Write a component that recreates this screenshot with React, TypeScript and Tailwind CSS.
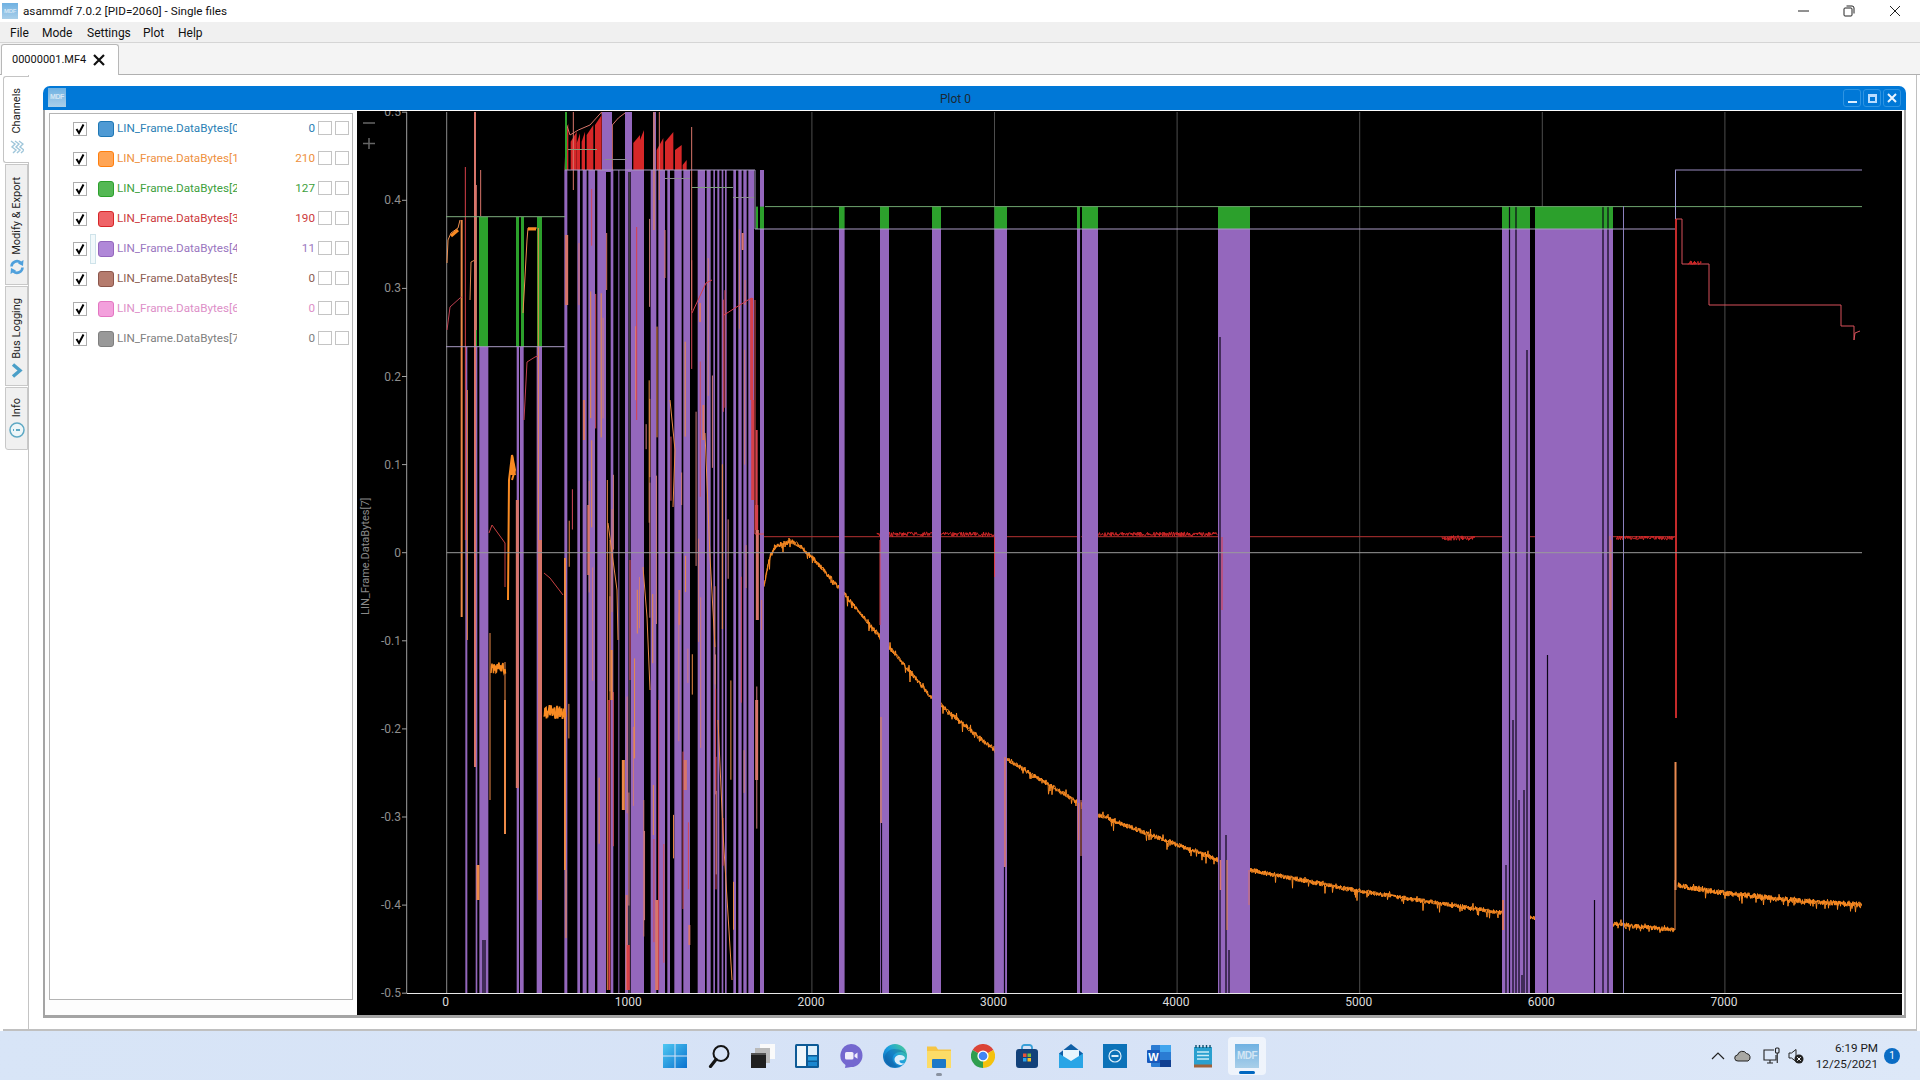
import React from "react";

const FONT = "font-['Roboto',sans-serif]";

// ---------- chart helpers (page coordinates; the svg viewBox starts at the plot's top-left) ----------
const X = (t: number) => 446.7 + 0.1826 * t;
const Y = (v: number) => 552.7 - 881 * v;
const Z = (px: number) => 360 + px / 3;
const TOP = 112;
const BOT = 993;

function rng(seed: number) {
  let s = seed;
  return () => {
    s = (s * 9301 + 49297) % 233280;
    return s / 233280;
  };
}

function noisy(anchors: [number, number][], seed: number, amp: number, spike: number) {
  const r = rng(seed);
  const pts: string[] = [];
  for (let i = 0; i < anchors.length - 1; i++) {
    const [x1, y1] = anchors[i];
    const [x2, y2] = anchors[i + 1];
    for (let x = x1; x < x2; x += 0.5) {
      const y = y1 + ((y2 - y1) * (x - x1)) / (x2 - x1);
      const k = r();
      const j = k > 0.92 ? (r() - 0.35) * spike : (r() - 0.5) * amp;
      pts.push(`${x.toFixed(1)},${(y + j).toFixed(1)}`);
    }
  }
  return pts.join(" ");
}

const purple = "#9467bd";
const green = "#2ca02c";
const red = "#d62728";
const orange = "#f98a22";
const S = "#d8756a";
const O = "#ec8a48";
const R = "#d8404a";

const earlyBars: [number, number][] = [
  [316, 322], [347, 352], [358, 385], [470, 477], [480, 491], [530, 546],
];
const denseBars: [number, number][] = [
  [613, 622], [652, 660], [668, 680], [685, 705], [712, 738], [752, 760], [775, 778], [795, 805], [812, 852],
  [872, 889], [895, 915], [922, 930], [943, 965], [970, 990], [1013, 1035], [1040, 1052], [1060, 1065],
  [1072, 1078], [1085, 1090], [1095, 1100], [1120, 1128], [1135, 1145], [1150, 1160], [1165, 1182], [1200, 1212],
];
const laterBars: [number, number][] = [
  [839, 844.6], [880, 889], [932, 941], [994.4, 1007], [1077, 1080], [1082, 1098], [1218, 1250],
  [1502, 1530], [1535, 1613],
];
const greenEarly: [number, number][] = [[474, 477], [479, 488], [516, 519], [521, 524], [537, 542]];
const greenLater = [...laterBars, [756, 758] as [number, number], [760, 764] as [number, number]];

const blacks: [number, number, number][] = [
  [881.5, 823, BOT], [1004.5, 867, BOT], [1080.7, 229, BOT], [1220, 337, BOT], [1226, 835, BOT], [1229, 950, BOT],
  [1509.5, 206, BOT], [1516, 206, BOT], [1513, 720, BOT], [1527, 350, BOT], [1524, 790, BOT], [1603, 206, BOT],
  [1608, 206, BOT], [1547.5, 655, BOT], [1594.5, 900, BOT], [1506, 865, BOT], [1519, 800, BOT], [1522, 975, BOT],
  [485, 940, BOT], [483, 940, BOT],
];

const segs: [number, number, number, string, number][] = [
  [305, 220, 617, O, 2], [316, 167, 540, R, 1], [345, 112, 767, S, 2], [349, 185, 330, S, 1], [362, 170, 216, S, 1],
  [322, 390, 640, O, 1], [435, 700, 834, O, 2], [535, 228, 560, O, 1], [540, 540, 900, S, 4], [472, 500, 788, S, 3],
  [615, 558, 870, O, 2], [618, 870, 938, O, 1], [640, 112, 190, S, 1], [620, 235, 305, S, 3], [657, 243, 305, S, 1],
  [740, 233, 290, S, 1], [830, 227, 420, R, 1], [915, 230, 278, S, 1], [995, 127, 310, S, 1], [1020, 303, 322, S, 2],
  [1175, 298, 400, R, 3], [1148, 233, 250, S, 2], [1155, 280, 305, S, 1], [882, 112, 230, O, 1], [898, 112, 200, S, 1],
  [1178, 400, 500, R, 3], [1190, 505, 530, R, 3], [1190, 700, 780, S, 3], [1192, 530, 620, S, 3], [1205, 600, 630, S, 1],
  [685, 505, 575, S, 2], [672, 400, 440, S, 2], [750, 540, 700, O, 1], [755, 650, 700, O, 2], [810, 560, 680, R, 1],
  [790, 760, 810, O, 3], [800, 895, 990, S, 2], [805, 945, 990, R, 3], [880, 785, 835, O, 1], [890, 900, 990, S, 3],
  [896, 700, 990, R, 1], [976, 760, 790, S, 3], [988, 925, 945, S, 2], [958, 590, 625, S, 2], [748, 700, 990, R, 2],
  [742, 480, 990, O, 1], [1030, 405, 440, S, 2], [1190, 430, 520, R, 2], [354, 865, 900, O, 3],
];

const laterSegs: [number, number, number, string, number][] = [
  [881, 717, 823, O, 1], [1005, 757, 867, S, 1.5], [1078.5, 803, 840, S, 1.5], [1081, 800, 856, S, 1], [1220.5, 860, 890, S, 1.5],
  [1227, 860, 930, O, 1], [1249, 870, 905, S, 1], [994.5, 537, 577, R, 1], [880, 540, 625, R, 1], [1222, 537, 590, R, 1],
  [1222, 590, 610, R, 1], [1611, 540, 610, S, 1], [1503, 900, 930, S, 2],
];

// thin blended traces scattered over the dense block
const scatter: [number, number, number, string][] = (() => {
  const r = rng(41);
  const out: [number, number, number, string][] = [];
  for (let i = 0; i < 70; i++) {
    const x = 566 + r() * 198;
    const a = 175 + r() * 720;
    const len = 25 + r() * 140;
    const k = r();
    out.push([x, a, Math.min(a + len, BOT), k < 0.55 ? "#cf7a78" : k < 0.8 ? "#ea8a45" : "#d24a58"]);
  }
  return out;
})();

const sawtooth: number[][] = [
  [618, 70], [625, 70], [632, 95], [650, 95], [650, 100], [660, 100], [665, 95], [675, 95], [680, 75], [700, 75], [705, 45], [725, 45],
];

const Chart = () => {
  const anchors: [number, number][] = [[764, 585], [770, 557], [775, 547], [790, 541], [800, 546], [812, 557], [841, 590], [880, 637], [890, 648], [931, 697], [994, 750], [1008, 760], [1079, 803], [1098, 815], [1218, 860], [1250, 870], [1353, 890], [1502, 913], [1530, 917], [1594, 922], [1675, 930]];
  const orangeMain = noisy(anchors, 7, 5, 16);
  const orangeMain2 = noisy(anchors, 29, 4, 10);
  const endAnchors: [number, number][] = [[1678, 885], [1690, 888], [1724, 893], [1790, 900], [1862, 905]];
  const orangeEnd = noisy(endAnchors, 11, 6, 14);
  const orangeEnd2 = noisy(endAnchors, 31, 5, 10);
  const redBase = noisy([[877, 534], [1000, 534]], 3, 4, 5);
  const redB2 = noisy([[1098, 534], [1218, 534]], 5, 4, 5);
  const redB3 = noisy([[1442, 538], [1475, 538]], 9, 5, 4);
  const redB4 = noisy([[1616, 538], [1675, 538]], 13, 4, 4);
  return (
    <svg viewBox="357 111 1545 904" className={`block h-[904px] w-[1545px] bg-black ${FONT}`} fontSize="12">
      {/* grid */}
      {[1000, 2000, 3000, 4000, 5000, 6000, 7000].map((t) => (
        <line key={t} x1={X(t)} x2={X(t)} y1={TOP} y2={BOT} stroke="#4d4d4d" />
      ))}
      {/* channel 0, vertical */}
      <line x1={446.7} x2={446.7} y1={TOP} y2={BOT} stroke="#8a8a8a" />
      {/* orange and red traces that are hidden by the purple bars */}
      <polyline points={orangeMain} fill="none" stroke={orange} strokeWidth="1" />
      <polyline points={orangeMain2} fill="none" stroke={orange} strokeWidth="1" />
      <polyline points={orangeEnd} fill="none" stroke={orange} strokeWidth="1" />
      <polyline points={orangeEnd2} fill="none" stroke={orange} strokeWidth="1" />
      <line x1={760} x2={1676} y1={536.7} y2={536.7} stroke="#b53232" />
      <polyline points={redBase} fill="none" stroke={red} strokeWidth="1" />
      <polyline points={redB2} fill="none" stroke={red} strokeWidth="1" />
      <polyline points={redB3} fill="none" stroke={red} strokeWidth="1" />
      <polyline points={redB4} fill="none" stroke={red} strokeWidth="1" />

      {/* sawtooth above the dense block */}
      {sawtooth.map(([px, py], i) =>
        i % 2 === 0 ? (
          <polygon
            key={px + "-" + i}
            points={`${Z(px)},170 ${Z(px)},${100 + py / 3 + 10} ${Z(sawtooth[i + 1][0])},${100 + py / 3} ${Z(sawtooth[i + 1][0])},170`}
            fill={red}
          />
        ) : null,
      )}
      <polyline
        points={`${Z(615)},170 ${Z(620)},125 ${Z(630)},135 ${Z(655)},130 ${Z(690)},125 ${Z(725)},112 ${Z(757)},170 ${Z(757)},125 ${Z(775)},118 ${Z(795)},113`}
        fill="none"
        stroke={S}
      />
      {[[820, 840, 143, 135], [840, 852, 140, 130], [890, 910, 150, 138], [915, 940, 142, 132], [945, 965, 150, 145], [968, 980, 165, 160]].map(
        ([a, b, c, d]) => (
          <polygon key={a} points={`${Z(a)},170 ${Z(a)},${c} ${Z(b)},${d} ${Z(b)},170`} fill={red} />
        ),
      )}

      {/* purple bars */}
      {earlyBars.map(([a, b]) => (
        <rect key={a} x={Z(a)} width={(b - a) / 3} y={347} height={BOT - 347} fill={purple} />
      ))}
      {denseBars.map(([a, b]) => (
        <rect key={a} x={Z(a)} width={(b - a) / 3} y={170} height={BOT - 170} fill={purple} />
      ))}
      <rect x={602} width={10} y={TOP} height={60} fill={purple} />
      <rect x={625} width={7} y={TOP} height={60} fill={purple} />
      <rect x={653} width={3} y={TOP} height={60} fill={purple} />
      {laterBars.map(([a, b]) => (
        <rect key={a} x={a} width={b - a} y={229} height={BOT - 229} fill={purple} />
      ))}
      <rect x={1079} width={1} y={229} height={BOT - 229} fill={purple} />

      {/* green bars */}
      {greenEarly.map(([a, b]) => (
        <rect key={a} x={a} width={b - a} y={217} height={130} fill={green} />
      ))}
      {greenLater.map(([a, b]) => (
        <rect key={a} x={a} width={b - a} y={206.6} height={22.4} fill={green} />
      ))}
      <rect x={565} width={2} y={112} height={58} fill={green} />

      {/* black gaps */}
      {blacks.map(([x, a, b], i) => (
        <line key={i} x1={x} x2={x} y1={a} y2={b} stroke="#0b0616" strokeWidth="1.2" />
      ))}

      {/* overlaid traces */}
      {scatter.map(([x, a, b, c], i) => (
        <line key={i} x1={x} x2={x} y1={a} y2={b} stroke={c} strokeWidth="1" />
      ))}
      {segs.map(([px, a, b, c, w], i) => (
        <line key={i} x1={Z(px)} x2={Z(px)} y1={a} y2={b} stroke={c} strokeWidth={w} />
      ))}
      {laterSegs.map(([x, a, b, c, w], i) => (
        <line key={i} x1={x} x2={x} y1={a} y2={b} stroke={c} strokeWidth={w} />
      ))}
      {/* early curves */}
      <polyline points="447,263 448,240 451,233 458,228 460,220" fill="none" stroke="#f09050" />
      <polyline points="451,236 458,230" fill="none" stroke={orange} strokeWidth="3" />
      <polyline points="447,330 450,307 460,298 462,297" fill="none" stroke="#c04050" />
      <polyline points="470,300 471,262 475,260" fill="none" stroke="#e08a50" />
      <polyline points="523,313 527,240 528,228 537,228" fill="none" stroke="#f09050" />
      <line x1={528} x2={536} y1={229} y2={229} stroke={orange} strokeWidth="3" />
      <polyline points="524,420 527,362 535,357 538,356" fill="none" stroke="#c04050" />
      <polyline points="489,533 492,525 505,543 505,587" fill="none" stroke="#c84040" />
      <polyline points="544,573 550,578 563,595" fill="none" stroke="#c84040" />
      <polyline points="508,600 509,480 512,455 515,470 512,480" fill="none" stroke={orange} strokeWidth="2" />
      <polygon points="510,470 513,455 515,470 516,475 510,475" fill={orange} />
      <line x1={490} x2={490} y1={633} y2={800} stroke={O} />
      <line x1={505} x2={505} y1={662} y2={830} stroke={O} />
      <polyline points={noisy([[491, 668], [506, 668]], 17, 12, 14)} fill="none" stroke={orange} strokeWidth="1.5" />
      <polyline points={noisy([[544, 712], [566, 712]], 19, 14, 14)} fill="none" stroke={orange} strokeWidth="1.8" />
      <polyline points="608,523 617,590 618,640" fill="none" stroke={O} />
      <polyline points="643,567 647,617 650,690" fill="none" stroke={O} />
      <polyline points="670,400 675,450 673,507" fill="none" stroke={O} />
      <polyline points="705,433 710,557 715,647" fill="none" stroke={O} />
      <polyline points="718,720 723,833 732,980" fill="none" stroke={O} />
      <polyline points="692,313 706,283 712,280" fill="none" stroke={R} />
      <polyline points="724,315 735,308 748,300 752,298" fill="none" stroke={R} />
      <polyline points="755,300 755,534 764,534" fill="none" stroke="#e05050" />
      <line x1={1610} x2={1610} y1={536} y2={610} stroke={S} />

      {/* step traces */}
      <line x1={446} x2={565} y1={216.7} y2={216.7} stroke="#7fae7f" />
      <line x1={446} x2={565} y1={346.7} y2={346.7} stroke="#a99ac4" />
      <line x1={565} x2={755} y1={170} y2={170} stroke="#a99ac4" />
      <line x1={755} x2={755} y1={170} y2={229} stroke="#a99ac4" />
      <line x1={755} x2={1675} y1={229} y2={229} stroke="#a99ac4" />
      <line x1={765} x2={1862} y1={206.6} y2={206.6} stroke="#6fa56f" />
      <line x1={1675.5} x2={1675.5} y1={170} y2={229} stroke="#a0a0d8" />
      <line x1={1675} x2={1862} y1={170} y2={170} stroke="#9a8cc0" />
      <line x1={568} x2={597} y1={149.5} y2={149.5} stroke="#8a9a7a" />
      <line x1={605} x2={627} y1={159.5} y2={159.5} stroke="#8a8a90" />
      <line x1={665} x2={690} y1={178.5} y2={178.5} stroke="#8a8a90" />
      <line x1={692} x2={733} y1={187.5} y2={187.5} stroke="#7f9f7f" />
      <line x1={733} x2={754} y1={197.5} y2={197.5} stroke="#8a8a90" />
      <line x1={1623.5} x2={1623.5} y1={206} y2={BOT} stroke="#8b80bd" />

      {/* red trace at the end */}
      <line x1={1676} x2={1676} y1={219} y2={718} stroke="#c42a2a" strokeWidth="2" />
      <polyline
        points="1676,219 1682,219 1682,264 1709,264 1709,305 1841,305 1841,326 1854,326 1854,340 1855,333 1860,331"
        fill="none"
        stroke="#d8505a"
      />
      <polyline points={noisy([[1688, 263], [1702, 263]], 23, 4, 2)} fill="none" stroke={red} />
      <line x1={1675.5} x2={1675.5} y1={762} y2={890} stroke="#e88a50" strokeWidth="2" />
      <polyline points="1675,930 1675,880" fill="none" stroke="#e88a50" />

      {/* zero line */}
      <line x1={446.7} x2={1862} y1={552.7} y2={552.7} stroke="#9a9a9a" />

      {/* axes */}
      <line x1={406.7} x2={406.7} y1={TOP} y2={BOT} stroke="#a0a0a0" />
      <line x1={407} x2={1902} y1={993.5} y2={993.5} stroke="#e8e8e8" />
      {[0.5, 0.4, 0.3, 0.2, 0.1, 0, -0.1, -0.2, -0.3, -0.4, -0.5].map((v) => (
        <g key={v}>
          <line x1={402} x2={407} y1={Y(v)} y2={Y(v)} stroke="#a0a0a0" />
          <text x={401} y={Y(v) + 4} textAnchor="end" fill="#8f8f8f">
            {v}
          </text>
        </g>
      ))}
      {[0, 1000, 2000, 3000, 4000, 5000, 6000, 7000].map((t) => (
        <text key={t} x={X(t) - 1} y={1006} textAnchor="middle" fill="#dcdcdc">
          {t}
        </text>
      ))}
      <text transform="translate(369 615) rotate(-90)" fill="#8a8a8a" fontSize="11">
        LIN_Frame.DataBytes[7]
      </text>
      {/* zoom marks */}
      <line x1={363} x2={375} y1={123} y2={123} stroke="#666" strokeWidth="1.5" />
      <line x1={363} x2={375} y1={143.5} y2={143.5} stroke="#666" strokeWidth="1.5" />
      <line x1={369} x2={369} y1={138} y2={149} stroke="#666" strokeWidth="1.5" />
    </svg>
  );
};

// ---------- small app pieces ----------
const MdfIcon = ({ size, text }: { size: string; text: string }) => (
  <div
    className={`${size} ${text} flex shrink-0 items-center justify-center overflow-hidden bg-gradient-to-b from-[#6fb1e2] to-[#a9cfe9] font-bold tracking-tighter text-[#d4e6f4] font-['Liberation_Sans',sans-serif]`}
  >
    MDF
  </div>
);

const channels = [
  { n: 0, v: "0", c: "text-[#2b7fb5]", s: "bg-[#4f9ad4] border-[#1f77b4]" },
  { n: 1, v: "210", c: "text-[#ee9040]", s: "bg-[#ffa555] border-[#ff7f0e]" },
  { n: 2, v: "127", c: "text-[#3d9f3d]", s: "bg-[#55b855] border-[#2ca02c]" },
  { n: 3, v: "190", c: "text-[#cc3a3c]", s: "bg-[#ef6468] border-[#d62728]" },
  { n: 4, v: "11", c: "text-[#9a76c0]", s: "bg-[#b088d8] border-[#9467bd]" },
  { n: 5, v: "0", c: "text-[#8c5d52]", s: "bg-[#b57c6e] border-[#8c564b]" },
  { n: 6, v: "0", c: "text-[#dd8fc8]", s: "bg-[#f3a0dc] border-[#e377c2]" },
  { n: 7, v: "0", c: "text-[#808080]", s: "bg-[#999999] border-[#7f7f7f]" },
];

const ChannelRow = ({ ch }: { ch: (typeof channels)[number] }) => (
  <div className="relative flex h-[30px] items-center pl-[23px]">
    <div className="flex h-[14px] w-[14px] shrink-0 items-center justify-center border border-[#adadad] bg-white">
      <svg viewBox="0 0 12 12" className="h-[12px] w-[12px]">
        <path d="M2.5 6 L5 10 L9.5 1.5" fill="none" stroke="#000" strokeWidth="2" />
      </svg>
    </div>
    {ch.n === 4 && <div className="absolute inset-y-0 left-[40px] w-[6px] border border-[#cfe3ea] bg-[#f2f9fb]" />}
    <div className={`ml-[11px] h-[16px] w-[16px] shrink-0 rounded-[3px] border ${ch.s}`} />
    <div className={`ml-[3px] w-[120px] shrink-0 overflow-hidden whitespace-nowrap text-[11.7px] ${ch.c}`}>
      LIN_Frame.DataBytes[{ch.n}]
    </div>
    <div className={`w-[78px] shrink-0 text-right text-[11.7px] ${ch.c}`}>{ch.v}</div>
    <div className="mb-[2px] ml-[3px] h-[14px] w-[14px] shrink-0 border border-[#c4c4c4]" />
    <div className="mb-[2px] ml-[3px] h-[14px] w-[14px] shrink-0 border border-[#c4c4c4]" />
  </div>
);

const VTab = ({
  label,
  icon,
  cls,
  gap,
}: {
  label: string;
  icon: React.ReactNode;
  cls: string;
  gap: string;
}) => (
  <div className={`flex flex-col items-center ${cls}`}>
    <span className="text-[11px] leading-[16px] text-[#222] [writing-mode:vertical-rl] rotate-180 whitespace-nowrap">
      {label}
    </span>
    <div className={gap}>{icon}</div>
  </div>
);

const Tile = ({ children, active }: { children: React.ReactNode; active?: boolean }) => (
  <div className="relative flex h-[38px] w-[44px] items-center justify-center">
    {active && <div className="absolute inset-y-0 left-[3px] right-[3px] rounded-[4px] bg-white/60" />}
    <div className="relative h-[24px] w-[24px]">{children}</div>
  </div>
);

const Svg = ({ children }: { children: React.ReactNode }) => (
  <svg viewBox="0 0 24 24" className="block h-[24px] w-[24px]">
    {children}
  </svg>
);

const TaskIcons = () => (
  <>
    <Tile>
      <Svg>
        <defs>
          <linearGradient id="win" x1="0" y1="0" x2="1" y2="1">
            <stop offset="0" stopColor="#4fc8f2" />
            <stop offset="1" stopColor="#0a72cf" />
          </linearGradient>
        </defs>
        <path d="M0 0h11.5v11.5H0zM12.5 0H24v11.5H12.5zM0 12.5h11.5V24H0zM12.5 12.5H24V24H12.5z" fill="url(#win)" />
      </Svg>
    </Tile>
    <Tile>
      <Svg>
        <circle cx="14" cy="9.5" r="7.5" fill="none" stroke="#141414" strokeWidth="2" />
        <path d="M9 15.5 L3.5 22.5" stroke="#141414" strokeWidth="3.2" strokeLinecap="round" />
      </Svg>
    </Tile>
    <Tile>
      <Svg>
        <rect x="9" y="0" width="15" height="15" fill="#fafafa" />
        <rect x="4" y="4" width="15" height="15" fill="#b9b9b9" />
        <rect x="0" y="9" width="15" height="15" fill="#1f1f1f" />
        <rect x="0" y="9" width="15" height="2" fill="#555" />
      </Svg>
    </Tile>
    <Tile>
      <Svg>
        <rect width="24" height="24" rx="1.5" fill="#0d5a96" />
        <rect x="2" y="2" width="9" height="20" fill="#eef6fb" />
        <rect x="13" y="2" width="9" height="9" fill="#dff0fb" />
        <rect x="13" y="12.5" width="9" height="4" fill="#29a0e0" />
        <rect x="13" y="18" width="9" height="4" fill="#1a86cf" />
      </Svg>
    </Tile>
    <Tile>
      <Svg>
        <path d="M12 0a11.5 11.5 0 0 1 0 23c-1.5 0-4 1-6 1l.5-3A11.5 11.5 0 0 1 12 0z" fill="#7468cf" />
        <rect x="6" y="8" width="8.5" height="7.5" rx="1.6" fill="#f0eefb" />
        <path d="M15.5 10.8 18.5 8.6v6.2l-3-2.1z" fill="#f0eefb" />
      </Svg>
    </Tile>
    <Tile>
      <Svg>
        <defs>
          <linearGradient id="edge" x1="0" y1="1" x2="1" y2="0">
            <stop offset="0" stopColor="#0c59a4" />
            <stop offset="0.5" stopColor="#1b9de2" />
            <stop offset="1" stopColor="#4fd28a" />
          </linearGradient>
        </defs>
        <circle cx="12" cy="12" r="12" fill="url(#edge)" />
        <path d="M24 13c0-3-3-5-6.500-5-5 0-8 3.500-8 7s3.500 7 7.500 7c-7 3-14-1-15.500-9C3 8 7 5 11 5c7 0 13 3 13 8z" fill="#0c4f94" opacity=".35" />
        <path d="M22 14.500c0-2-2-3.500-5-3.500s-5.500 2-5.500 4.500c0 3 3 5.500 7 5.500l3-1.500c-3 .5-5-1-5-2.500s3 .5 5.500-2.500z" fill="#dbeefa" />
      </Svg>
    </Tile>
    <div className="relative">
      <Tile>
        <Svg>
          <path d="M0 2.500h9l2 3h13V24H0z" fill="#f6c544" />
          <rect y="7" width="24" height="17" fill="#fcdc67" />
          <rect x="5" y="15" width="14" height="9" rx="1" fill="#1b78c8" />
        </Svg>
      </Tile>
      <div className="absolute bottom-[-1px] left-[19px] h-[3px] w-[6px] rounded-full bg-[#8a92a0]" />
    </div>
    <Tile>
      <Svg>
        <path d="M12 12 1.600 6A12 12 0 0 1 22.400 6z" fill="#db4437" />
        <path d="M12 12 22.400 6A12 12 0 0 1 12 24z" fill="#f4c20d" />
        <path d="M12 12 12 24A12 12 0 0 1 1.600 6z" fill="#2f9e4f" />
        <circle cx="12" cy="12" r="5.600" fill="#fff" />
        <circle cx="12" cy="12" r="4.300" fill="#4285f4" />
      </Svg>
    </Tile>
    <Tile>
      <Svg>
        <path d="M7 7V3.500a2.500 2.500 0 0 1 2.500-2.500h5A2.500 2.500 0 0 1 17 3.500V7" fill="none" stroke="#3aa0d8" strokeWidth="1.800" />
        <rect x="1" y="5" width="22" height="19" rx="3" fill="#12417a" />
        <rect x="8" y="9.500" width="3.500" height="3.500" fill="#e8553a" />
        <rect x="12.500" y="9.500" width="3.500" height="3.500" fill="#7cbb3f" />
        <rect x="8" y="14" width="3.500" height="3.500" fill="#2aa4ec" />
        <rect x="12.500" y="14" width="3.500" height="3.500" fill="#fbbf24" />
      </Svg>
    </Tile>
    <Tile>
      <Svg>
        <path d="M12 0 24 9.500V24H0V9.500z" fill="#0f5fa6" />
        <path d="M4 6h16v9l-8 5-8-5z" fill="#e8f5fd" />
        <path d="M0 9.500 12 17 24 9.500V24H0z" fill="#29a5e6" />
      </Svg>
    </Tile>
    <Tile>
      <Svg>
        <rect width="24" height="24" fill="#0c72b8" />
        <circle cx="12" cy="12" r="6" fill="none" stroke="#dbeefa" strokeWidth="1.200" />
        <rect x="8.500" y="11" width="7" height="2" fill="#dbeefa" />
      </Svg>
    </Tile>
    <Tile>
      <Svg>
        <rect x="4" y="1" width="20" height="22" rx="1" fill="#2b7cd3" />
        <rect x="13" y="1" width="11" height="7" fill="#41a5ee" />
        <rect x="13" y="16" width="11" height="7" fill="#103f91" />
        <rect x="0" y="6" width="13" height="13" rx="1" fill="#185abd" />
        <text x="6.500" y="16.500" textAnchor="middle" fontSize="11" fontWeight="700" fill="#fff" className="font-['Liberation_Sans',sans-serif]">
          W
        </text>
      </Svg>
    </Tile>
    <Tile>
      <Svg>
        <rect x="3" y="3" width="18" height="18" fill="#2aa0cf" />
        <path d="M6 8h12M6 11.500h12M6 15h12" stroke="#c9ecf7" strokeWidth="1.500" />
        <path d="M5 1v3M8.500 1v3M12 1v3M15.500 1v3M19 1v3" stroke="#12506e" strokeWidth="1.400" />
        <rect x="3" y="20.500" width="18" height="3" fill="#a0623a" />
      </Svg>
    </Tile>
    <div className="relative">
      <Tile active>
        <MdfIcon size="h-[24px] w-[24px]" text="text-[10px]" />
      </Tile>
      <div className="absolute bottom-[1px] left-[14px] h-[3px] w-[16px] rounded-full bg-[#0067c0]" />
    </div>
  </>
);

export default function App() {
  return (
    <div className={`flex h-[1080px] w-[1920px] flex-col overflow-hidden bg-white ${FONT} text-[#111]`}>
      {/* title bar */}
      <div className="flex h-[22px] shrink-0 items-center bg-white">
        <div className="ml-[2px]">
          <MdfIcon size="h-[16px] w-[16px]" text="text-[6px]" />
        </div>
        <div className="ml-[5px] pt-px text-[11.7px] whitespace-nowrap">asammdf 7.0.2 [PID=2060] - Single files</div>
        <div className="ml-auto flex items-center">
          <svg viewBox="0 0 12 12" className="h-[12px] w-[12px]">
            <path d="M0 6h11" stroke="#222" strokeWidth="1" />
          </svg>
          <svg viewBox="0 0 12 12" className="ml-[33px] h-[12px] w-[12px]">
            <rect x="1" y="3" width="8" height="8" rx="1" fill="none" stroke="#222" />
            <path d="M3.500 1h5.500a2 2 0 0 1 2 2v5.500" fill="none" stroke="#222" />
          </svg>
          <svg viewBox="0 0 12 12" className="ml-[34px] mr-[19px] h-[12px] w-[12px]">
            <path d="M1 1l10 10M11 1 1 11" stroke="#222" strokeWidth="1" />
          </svg>
        </div>
      </div>

      {/* menu bar */}
      <div className="flex h-[21px] shrink-0 items-center border-b border-[#d5d5d5] bg-[#f0f0f0] pl-[10px] pt-px text-[12px]">
        <span className="w-[32px]">File</span>
        <span className="w-[45px]">Mode</span>
        <span className="w-[56px]">Settings</span>
        <span className="w-[35px]">Plot</span>
        <span>Help</span>
      </div>

      {/* document tabs */}
      <div className="flex h-[32px] shrink-0 items-end border-b border-[#b0b0b0] bg-[#f4f4f4]">
        <div className="z-10 -mb-px ml-px flex h-[31px] w-[118px] items-center rounded-t-[3px] border border-b-0 border-[#b8b8b8] bg-white pl-[10px] text-[11px]">
          00000001.MF4
          <svg viewBox="0 0 12 12" className="ml-[7px] h-[12px] w-[12px]">
            <path d="M1 1l10 10M11 1 1 11" stroke="#111" strokeWidth="2.200" />
          </svg>
        </div>
      </div>

      {/* main pane */}
      <div className="mx-[3px] flex h-[956px] w-[1914px] shrink-0 border-b-2 border-r border-[#c0c0c0]">
        {/* vertical tabs */}
        <div className="z-10 -mr-px flex w-[26px] shrink-0 flex-col pt-px">
          <VTab
            label="Channels"
            cls="h-[87px] w-[26px] rounded-l-[3px] border border-r-0 border-[#c4c4c4] bg-white pt-[11px]"
            gap="mt-[6px]"
            icon={
              <svg viewBox="0 0 14 14" className="h-[14px] w-[14px]" fill="none" stroke="#9fc6da" strokeWidth="1.400">
                <path d="M1 1l4 3-3 3 4 3-3 3M5 1l4 3-3 3 4 3-3 3M9 1l4 3-3 3 4 3-3 3" />
              </svg>
            }
          />
          <VTab
            label="Modify & Export"
            cls="ml-[2px] mt-px h-[121px] w-[23px] border border-[#c8c8c8] bg-[#f0f0f0] pt-[12px]"
            gap="mt-[4px]"
            icon={
              <svg viewBox="0 0 16 16" className="h-[16px] w-[16px]" fill="none" stroke="#4fa0dc" strokeWidth="2.600">
                <path d="M2.500 7.500A5.500 5.500 0 0 1 11.500 3.500" />
                <path d="M13.500 8.500A5.500 5.500 0 0 1 4.500 12.500" />
                <path d="M14.500 1 14 7 9 4.500z" fill="#4fa0dc" stroke="none" />
                <path d="M1.500 15 2 9 7 11.500z" fill="#4fa0dc" stroke="none" />
              </svg>
            }
          />
          <VTab
            label="Bus Logging"
            cls="ml-[2px] mt-px h-[100px] w-[23px] border border-[#c8c8c8] bg-[#f0f0f0] pt-[11px]"
            gap="mt-[4px]"
            icon={
              <svg viewBox="0 0 14 15" className="h-[15px] w-[14px]" fill="none" stroke="#4a9fc8" strokeWidth="3.400">
                <path d="M3 1.500 10 7.500 3 13.500" />
              </svg>
            }
          />
          <VTab
            label="Info"
            cls="ml-[2px] mt-px h-[63px] w-[23px] rounded-bl-[3px] border border-[#c8c8c8] bg-[#f0f0f0] pt-[10px]"
            gap="mt-[5px]"
            icon={
              <svg viewBox="0 0 16 16" className="h-[16px] w-[16px]">
                <circle cx="8" cy="8" r="7" fill="#eef6f8" stroke="#5fa9c4" strokeWidth="1.500" />
                <path d="M4 8h1M7 8h4" stroke="#5fa9c4" strokeWidth="1.800" />
              </svg>
            }
          />
        </div>

        {/* mdi area */}
        <div className="flex min-w-0 flex-1 border-l border-[#c4c4c4] bg-white pb-[9px] pl-[14px] pt-[11px]">
          <div className="flex h-[932px] w-[1863px] flex-col">
            <div className="relative flex h-[24px] shrink-0 items-center justify-center rounded-t-[7px] bg-[#0078d7] pr-[38px] pt-px text-[12px] text-[#1c2833]">
              <div className="absolute left-[5px] top-[2px]">
                <MdfIcon size="h-[19px] w-[18px]" text="text-[7px]" />
              </div>
              Plot 0
              <div className="absolute right-[5px] top-[3px] flex gap-[2px]">
                <div className="flex h-[18px] w-[18px] items-end justify-center rounded-[3px] border border-[#2e94e2] pb-[3px]">
                  <div className="h-[2px] w-[9px] bg-[#dcefff]" />
                </div>
                <div className="flex h-[18px] w-[18px] items-center justify-center rounded-[3px] border border-[#2e94e2]">
                  <div className="h-[9px] w-[9px] border-2 border-t-[3px] border-[#b8dcff]" />
                </div>
                <div className="flex h-[18px] w-[18px] items-center justify-center rounded-[3px] border border-[#2e94e2]">
                  <svg viewBox="0 0 10 10" className="h-[10px] w-[10px]">
                    <path d="M1 1l8 8M9 1 1 9" stroke="#eaf5ff" strokeWidth="2" />
                  </svg>
                </div>
              </div>
            </div>
            <div className="flex h-[908px] shrink-0 border-x-2 border-b-[3px] border-[#a4a4a4] bg-[#fdfdfd] pl-[4px] pr-[2px] pt-px">
              <div className="mb-[15px] mt-[2px] w-[304px] shrink-0 border border-[#b4b4b4] bg-white pr-[3px]">
                {channels.map((ch) => (
                  <ChannelRow key={ch.n} ch={ch} />
                ))}
              </div>
              <div className="ml-[4px]">
                <Chart />
              </div>
            </div>
          </div>
        </div>
      </div>

      {/* taskbar */}
      <div className="relative flex h-[49px] flex-1 items-center justify-center bg-gradient-to-r from-[#d8e5f7] via-[#d6e2f6] to-[#dde8f8]">
        <div className="flex translate-x-px items-center">
          <TaskIcons />
        </div>
        <div className="absolute right-[20px] top-0 flex h-full items-center">
          <svg viewBox="0 0 14 8" className="h-[8px] w-[14px]" fill="none" stroke="#222" strokeWidth="1.200">
            <path d="M1 7l6-6 6 6" />
          </svg>
          <svg viewBox="0 0 18 12" className="ml-[9px] h-[12px] w-[18px]">
            <path d="M4 11a3 3 0 0 1-.500-6 5 5 0 0 1 9-1.500A4 4 0 0 1 14 11z" fill="#a8a8a4" stroke="#222" strokeWidth="1" />
          </svg>
          <svg viewBox="0 0 18 18" className="ml-[11px] h-[18px] w-[18px]" fill="none" stroke="#222" strokeWidth="1.100">
            <path d="M11 3H1v10h12V8M7 13v3M4 16h6" />
            <rect x="12.500" y="1" width="3.500" height="5" rx="1" />
            <path d="M14.250 6v10" />
          </svg>
          <svg viewBox="0 0 16 16" className="ml-[7px] h-[16px] w-[16px]">
            <path d="M1 5v5h2.500L8 13.500V1.500L3.500 5z" fill="none" stroke="#222" strokeWidth="1" />
            <circle cx="11" cy="11" r="4.500" fill="#222" />
            <path d="M9.200 9.200l3.600 3.600M12.800 9.200l-3.600 3.600" stroke="#fff" strokeWidth="1" />
          </svg>
          <div className="ml-[12px] flex flex-col items-end text-[11.7px] leading-[16px] text-[#1a1a1a]">
            <span>6:19 PM</span>
            <span>12/25/2021</span>
          </div>
          <div className="ml-[6px] flex h-[16px] w-[16px] items-center justify-center rounded-full bg-[#0a6cc4] text-[10px] text-white">
            1
          </div>
        </div>
      </div>
    </div>
  );
}
